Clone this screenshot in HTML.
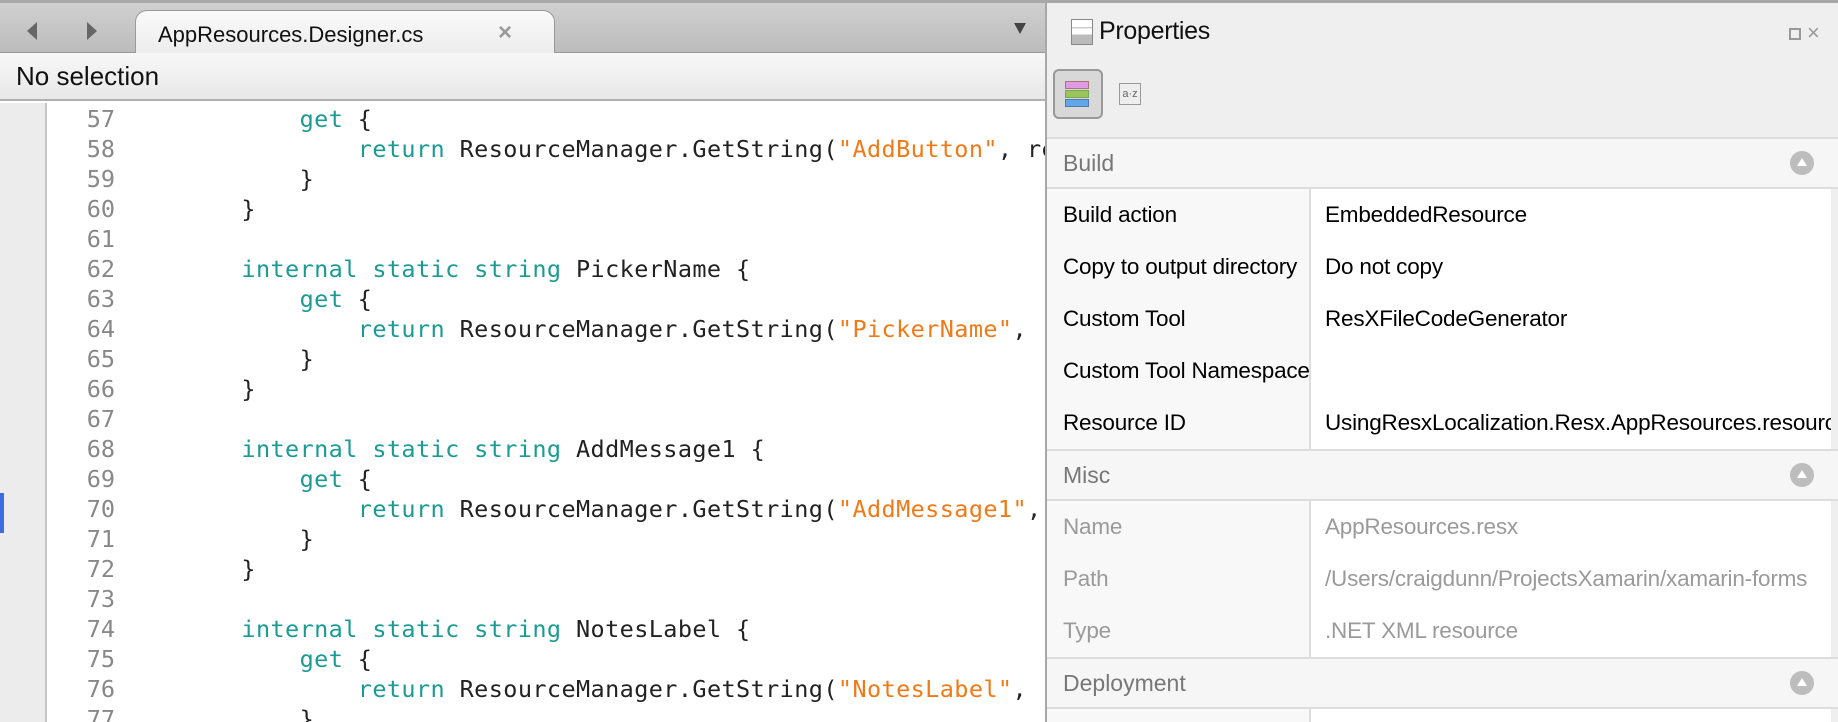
<!DOCTYPE html>
<html><head><meta charset="utf-8"><style>
*{margin:0;padding:0;box-sizing:border-box}
html,body{width:1838px;height:722px;overflow:hidden}
body{background:#fff;font-family:"Liberation Sans",sans-serif;position:relative}
.abs{position:absolute}
#tabbar{left:0;top:0;width:1045px;height:53px;background:linear-gradient(#d0d0d0,#bcbcbc);border-top:3px solid #a8a8a8;border-bottom:1px solid #999}
#tab{left:135px;top:10px;width:420px;height:44px;background:linear-gradient(#fafafa,#ececec);border:1px solid #9a9a9a;border-bottom:none;border-radius:12px 12px 0 0}
#selbar{left:0;top:53px;width:1045px;height:48px;background:linear-gradient(#f8f8f8,#e8e8e8);border-bottom:2px solid #b0b0b0;font-size:26px;line-height:46px;padding-left:16px;color:#111}
#code{left:0;top:103px;width:1045px;height:619px;background:#fff;overflow:hidden}
#gut{left:0;top:0;width:47px;height:619px;background:#ececec;border-right:2px solid #c6c6c6}
.ln{position:absolute;left:60px;width:55px;text-align:right;color:#888;font-family:"DejaVu Sans Mono",monospace;font-size:23.5px}
.cl{position:absolute;left:125px;white-space:pre;color:#222;font-family:"DejaVu Sans Mono",monospace;font-size:23.5px;letter-spacing:0.4px}
.k{color:#1c9a94}.s{color:#f17a18}
#panel{left:1045px;top:0;width:793px;height:722px;background:#efefef;border-left:2px solid #a8a8a8;border-top:3px solid #a8a8a8;overflow:hidden}
.hdr{position:absolute;left:0;width:791px;height:52px;background:#f6f6f6;border-top:2px solid #ddd;border-bottom:2px solid #ddd;font-size:23px;color:#777;line-height:48px;padding-left:16px}
.hdr i{position:absolute;right:24px;top:12px;width:24px;height:24px;border-radius:50%;background:#bdbdbd}
.hdr i:after{content:"";position:absolute;left:7px;top:7px;border-left:5px solid transparent;border-right:5px solid transparent;border-bottom:8px solid #fff}
.row{position:absolute;left:0;width:784px;height:52px;font-size:22.5px;line-height:52px;letter-spacing:-0.2px}
.row .a{position:absolute;left:0;width:264px;height:100%;background:#f8f8f8;padding-left:16px;white-space:nowrap;overflow:hidden;border-right:2px solid #ddd}
.row .b{position:absolute;left:264px;width:520px;height:100%;background:#fff;padding-left:14px;white-space:nowrap;overflow:hidden}
.g{color:#9a9a9a}
</style></head><body>
<div id="tabbar" class="abs"></div>
<div id="tab" class="abs"></div>
<div class="abs" style="left:158px;top:22px;font-size:22px;color:#111">AppResources.Designer.cs</div>
<div class="abs" style="left:498px;top:19px;font-size:24px;color:#9a9a9a;font-weight:bold">×</div>
<div class="abs" style="left:27px;top:22px;border-right:10px solid #666;border-top:9px solid transparent;border-bottom:9px solid transparent"></div>
<div class="abs" style="left:87px;top:22px;border-left:10px solid #666;border-top:9px solid transparent;border-bottom:9px solid transparent"></div>
<div class="abs" style="left:1014px;top:23px;border-top:11px solid #444;border-left:6px solid transparent;border-right:6px solid transparent"></div>
<div id="selbar" class="abs">No selection</div>
<div id="code" class="abs">
<div id="gut" class="abs"></div>
<div class="abs" style="left:0;top:390px;width:4px;height:40px;background:#3b6fe0"></div>
</div>
<div id="panel" class="abs">
<div class="abs" style="left:24px;top:16px;width:22px;height:26px;background:linear-gradient(#fff 0,#fff 30%,#ccc 30%,#ccc 35%,#fff 35%,#fff 60%,#bbb 60%);border:1px solid #888"></div>
<div class="abs" style="left:52px;top:14px;font-size:25px;color:#111;letter-spacing:-0.3px">Properties</div>
<div class="abs" style="left:742px;top:25px;width:12px;height:12px;border:2px solid #999"></div>
<div class="abs" style="left:760px;top:17px;font-size:22px;color:#999">×</div>
<div class="abs" style="left:6px;top:66px;width:50px;height:50px;border:2px solid #999;border-radius:6px;background:#d8d8d8"></div>
<div class="abs" style="left:18px;top:78px;width:24px;height:8px;background:#e09be4;border:1px solid #a77"></div>
<div class="abs" style="left:18px;top:87px;width:24px;height:8px;background:#9bc55a;border:1px solid #7a5"></div>
<div class="abs" style="left:18px;top:96px;width:24px;height:8px;background:#62a8e8;border:1px solid #57a"></div>
<div class="abs" style="left:72px;top:80px;width:22px;height:22px;border:1px solid #999;background:#eee;font-size:11px;color:#666;text-align:center;line-height:20px">a·z</div>
<div class="hdr" style="top:134px">Build<i></i></div>
<div class="row" style="top:186px"><div class="a">Build action</div><div class="b">EmbeddedResource</div></div>
<div class="row" style="top:238px"><div class="a">Copy to output directory</div><div class="b">Do not copy</div></div>
<div class="row" style="top:290px"><div class="a">Custom Tool</div><div class="b">ResXFileCodeGenerator</div></div>
<div class="row" style="top:342px"><div class="a">Custom Tool Namespace</div><div class="b"></div></div>
<div class="row" style="top:394px"><div class="a">Resource ID</div><div class="b">UsingResxLocalization.Resx.AppResources.resources</div></div>
<div class="hdr" style="top:446px">Misc<i></i></div>
<div class="row g" style="top:498px"><div class="a">Name</div><div class="b">AppResources.resx</div></div>
<div class="row g" style="top:550px"><div class="a">Path</div><div class="b">/Users/craigdunn/ProjectsXamarin/xamarin-forms</div></div>
<div class="row g" style="top:602px"><div class="a">Type</div><div class="b">.NET XML resource</div></div>
<div class="hdr" style="top:654px">Deployment<i></i></div>
<div class="row" style="top:706px;height:13px"><div class="a"></div><div class="b"></div></div>
</div>
<div class="abs" style="left:0;top:103px;width:1045px;height:619px;overflow:hidden">
<div class="ln" style="top:2px">57</div><div class="cl" style="top:2px">            <span class="k">get</span> {</div>
<div class="ln" style="top:32px">58</div><div class="cl" style="top:32px">                <span class="k">return</span> ResourceManager.GetString(<span class="s">"AddButton"</span>, resourceCulture);</div>
<div class="ln" style="top:62px">59</div><div class="cl" style="top:62px">            }</div>
<div class="ln" style="top:92px">60</div><div class="cl" style="top:92px">        }</div>
<div class="ln" style="top:122px">61</div>
<div class="ln" style="top:152px">62</div><div class="cl" style="top:152px">        <span class="k">internal static string</span> PickerName {</div>
<div class="ln" style="top:182px">63</div><div class="cl" style="top:182px">            <span class="k">get</span> {</div>
<div class="ln" style="top:212px">64</div><div class="cl" style="top:212px">                <span class="k">return</span> ResourceManager.GetString(<span class="s">"PickerName"</span>, resourceCulture);</div>
<div class="ln" style="top:242px">65</div><div class="cl" style="top:242px">            }</div>
<div class="ln" style="top:272px">66</div><div class="cl" style="top:272px">        }</div>
<div class="ln" style="top:302px">67</div>
<div class="ln" style="top:332px">68</div><div class="cl" style="top:332px">        <span class="k">internal static string</span> AddMessage1 {</div>
<div class="ln" style="top:362px">69</div><div class="cl" style="top:362px">            <span class="k">get</span> {</div>
<div class="ln" style="top:392px">70</div><div class="cl" style="top:392px">                <span class="k">return</span> ResourceManager.GetString(<span class="s">"AddMessage1"</span>, resourceCulture);</div>
<div class="ln" style="top:422px">71</div><div class="cl" style="top:422px">            }</div>
<div class="ln" style="top:452px">72</div><div class="cl" style="top:452px">        }</div>
<div class="ln" style="top:482px">73</div>
<div class="ln" style="top:512px">74</div><div class="cl" style="top:512px">        <span class="k">internal static string</span> NotesLabel {</div>
<div class="ln" style="top:542px">75</div><div class="cl" style="top:542px">            <span class="k">get</span> {</div>
<div class="ln" style="top:572px">76</div><div class="cl" style="top:572px">                <span class="k">return</span> ResourceManager.GetString(<span class="s">"NotesLabel"</span>, resourceCulture);</div>
<div class="ln" style="top:602px">77</div><div class="cl" style="top:602px">            }</div>
</div>
<div class="abs" style="left:1045px;top:0;width:2px;height:722px;background:#a8a8a8"></div>
</body></html>
